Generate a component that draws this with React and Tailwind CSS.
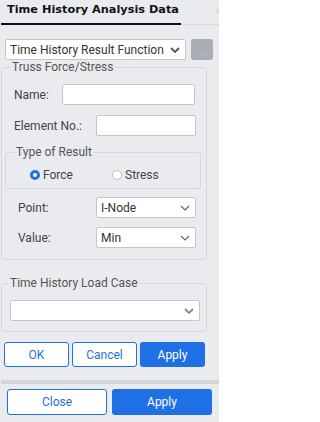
import React from "react";

function Chevron({ className = "", strokeWidth = 1.3 }) {
  return (
    <svg width="10" height="6" viewBox="0 0 10 6" className={className}>
      <path d="M1 1 L5 5 L9 1" fill="none" stroke="currentColor" strokeWidth={strokeWidth} />
    </svg>
  );
}

function Select({ value, className = "", chevronClass = "text-[#666]", sw = 1.2 }) {
  return (
    <div className={`flex items-center justify-between bg-white border border-[#c4c6cb] rounded-[2px] ${className}`}>
      <span className="pl-[4px] text-[#333] whitespace-nowrap">{value}</span>
      <Chevron className={`mr-[5px] ${chevronClass}`} strokeWidth={sw} />
    </div>
  );
}

function Input({ className = "" }) {
  return <div className={`bg-white border border-[#c4c6cb] rounded-[2px] ${className}`} />;
}

function Radio({ checked, label }) {
  return (
    <div className="flex items-center gap-[3px]">
      {checked ? (
        <span className="w-[10px] h-[10px] rounded-full border-[3px] border-[#1f6fe5] bg-white" />
      ) : (
        <span className="w-[10px] h-[10px] rounded-full border border-[#b9bbc0] bg-white" />
      )}
      <span className="text-[#444]">{label}</span>
    </div>
  );
}

export default function App() {
  return (
    <div
      className="w-[219px] h-[422px] bg-[#eaebef] text-[12px] leading-[14px] text-[#444] overflow-hidden"
      style={{ fontFamily: "Roboto, 'Noto Sans', sans-serif" }}
    >
      {/* header */}
      <div className="flex items-end h-[25px]">
        <div className="w-[180px] h-[25px] ml-[1px] border-b-2 border-[#111] flex items-start">
          <span
            className="ml-[6px] mt-[3px] font-bold text-[#111] whitespace-nowrap text-[11.3px]"
            style={{ fontFamily: "'DejaVu Sans', Verdana, sans-serif" }}
          >
            Time History Analysis Data
          </span>
        </div>
        <div className="flex-1 h-[25px] border-b border-[#d6d8dc] flex items-start justify-end">
          <span className="mt-[4px] text-[#c8cacf] text-[11px] leading-[14px]">‹</span>
        </div>
      </div>

      {/* function select */}
      <div className="flex items-center mt-[14px] ml-[5px] gap-[5px]">
        <Select
          value="Time History Result Function"
          className="w-[181px] h-[21px]"
          chevronClass="text-[#555]"
          sw={1.8}
        />
        <div className="w-[22px] h-[21px] rounded-[3px] bg-[#a9adb4] flex items-end justify-center pb-[3px] text-[#d3d6db] text-[9px] leading-[9px]">
          ...
        </div>
      </div>

      {/* Truss Force/Stress */}
      <fieldset className="ml-[1px] mt-[0px] w-[206px] h-[200px] border border-[#d5d7db] rounded-[3px]">
        <legend className="ml-[8px] px-[2px] text-[#555]">Truss Force/Stress</legend>
        <div className="flex items-center mt-[10px]">
          <span className="ml-[12px] w-[48px]">Name:</span>
          <Input className="w-[133px] h-[21px]" />
        </div>
        <div className="flex items-center mt-[10px]">
          <span className="ml-[12px] w-[82px]">Element No.:</span>
          <Input className="w-[100px] h-[21px]" />
        </div>
        <fieldset className="ml-[3px] mt-[9px] w-[196px] h-[44px] border border-[#d5d7db] rounded-[3px]">
          <legend className="ml-[8px] px-[2px] text-[#555]">Type of Result</legend>
          <div className="flex items-center mt-[9px]">
            <div className="ml-[24px] w-[82px]">
              <Radio checked label="Force" />
            </div>
            <Radio label="Stress" />
          </div>
        </fieldset>
        <div className="flex items-center mt-[8px]">
          <span className="ml-[16px] w-[78px]">Point:</span>
          <Select value="I-Node" className="w-[100px] h-[21px]" />
        </div>
        <div className="flex items-center mt-[9px]">
          <span className="ml-[16px] w-[78px]">Value:</span>
          <Select value="Min" className="w-[100px] h-[21px]" />
        </div>
      </fieldset>

      {/* Load case */}
      <fieldset className="ml-[1px] mt-[16px] w-[206px] h-[56px] border border-[#d5d7db] rounded-[3px]">
        <legend className="ml-[6px] px-[2px] text-[#555]">Time History Load Case</legend>
        <div className="mt-[10px] ml-[8px]">
          <Select value="" className="w-[190px] h-[21px]" chevronClass="text-[#888]" sw={1.8} />
        </div>
      </fieldset>

      {/* buttons */}
      <div className="flex ml-[4px] mt-[10px] gap-[3px]">
        <button className="w-[65px] h-[25px] rounded-[3px] border border-[#1f6fe5] bg-white text-[#1f6fe5]">OK</button>
        <button className="w-[65px] h-[25px] rounded-[3px] border border-[#1f6fe5] bg-white text-[#1f6fe5]">Cancel</button>
        <button className="w-[65px] h-[25px] rounded-[3px] bg-[#1f6fe5] text-white">Apply</button>
      </div>

      <div className="ml-[1px] mt-[13px] h-[4px] bg-[#d4d6da]" />

      <div className="flex ml-[7px] mt-[5px] gap-[5px]">
        <button className="w-[100px] h-[26px] rounded-[3px] border border-[#1f6fe5] bg-white text-[#1f6fe5]">Close</button>
        <button className="w-[100px] h-[26px] rounded-[3px] bg-[#1f6fe5] text-white">Apply</button>
      </div>
    </div>
  );
}
